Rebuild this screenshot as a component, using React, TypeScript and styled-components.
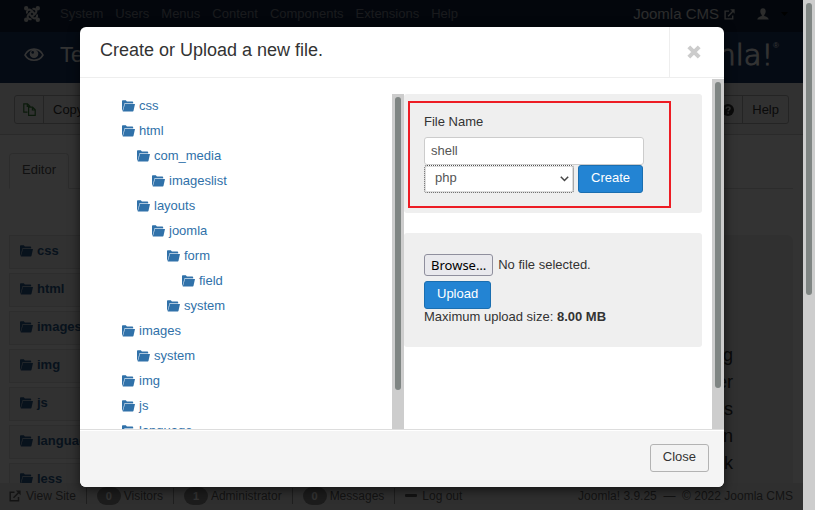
import React from "react";
import styled, { createGlobalStyle } from "styled-components";

const GlobalStyle = createGlobalStyle`
  *, *::before, *::after { box-sizing: border-box; }
  body { margin: 0; font: 13px/18px "Liberation Sans", Arial, sans-serif; color: #333; background: #fff; }
  button, input, select { font: inherit; color: inherit; margin: 0; }
  a { color: inherit; text-decoration: none; }
  h1, h3, p, ul { margin: 0; padding: 0; font-weight: normal; }
  ul { list-style: none; }
`;

const Screen = styled.div`
  display: grid;
  grid-template-columns: minmax(0, 1fr) 12px;
  height: 100vh;
`;

const Page = styled.div`
  position: relative;
  display: flex;
  flex-direction: column;
  overflow: hidden;
`;

const Track = styled.div`
  display: flex;
  justify-content: center;
  padding: 3px 0;
  width: 12px;
  flex: none;
  background: #cdcdcd;
`;

const Thumb = styled.div<{ $size: string }>`
  width: 6px;
  height: ${(p) => p.$size};
  border-radius: 3px;
  background: #7f8583;
`;

const Scrollbar = ({ size }: { size: string }) => (
  <Track aria-hidden="true">
    <Thumb $size={size} />
  </Track>
);

/* ---------- icons ---------- */

const Icon = styled.svg<{ $w?: number; $h?: number }>`
  width: ${(p) => p.$w ?? 13}px;
  height: ${(p) => p.$h ?? 12}px;
  flex: none;
  display: block;
`;

const FolderOpen = () => (
  <Icon viewBox="0 0 13 12" fill="currentColor">
    <path d="M0 1C0 .5.3.2.8.2H3.800L4.900 1.600H10.400c.5 0 .8.300.8.800V3H2.600L.5 10.500 0 10.200Z" />
    <path d="M3 4H13L11.500 10.800c-.1.400-.3.600-.7.600H.8Z" />
    <path d="M2.600 3H11.200V4H3L.8 11.400.3 10.500Z" opacity=".4" />
  </Icon>
);

const External = ({ size = 12 }: { size?: number }) => (
  <Icon $w={size} $h={size} viewBox="0 0 12 12" fill="none" stroke="currentColor" strokeWidth="1.5">
    <path d="M5.500 2.300H1.200V10.800H9.500V7M4.500 7.800 10.200 1.900" />
    <path d="M6.800.4H11.600V5.200Z" fill="currentColor" stroke="none" />
  </Icon>
);

const JoomlaMark = () => (
  <Icon $w={16} $h={16} viewBox="0 0 16 16" fill="none" stroke="currentColor" strokeWidth="2">
    <circle cx="2.200" cy="2.200" r="1.200" fill="currentColor" />
    <circle cx="13.800" cy="2.200" r="1.200" fill="currentColor" />
    <circle cx="2.200" cy="13.800" r="1.200" fill="currentColor" />
    <circle cx="13.800" cy="13.800" r="1.200" fill="currentColor" />
    <path d="M3 7.500C2.300 5 4.500 2.500 7 4.200L11.600 8.800M8.500 3C11 2.300 13.500 4.500 11.800 7L7.200 11.600M13 8.500C13.700 11 11.500 13.500 9 11.800L4.400 7.200M7.500 13C5 13.700 2.500 11.500 4.200 9L8.800 4.400" />
  </Icon>
);

const User = () => (
  <Icon $w={12} $h={12} viewBox="0 0 12 12" fill="currentColor">
    <path d="M6 .3c1.700 0 2.700 1.200 2.700 3 0 1.500-.6 2.900-1.500 3.600v1c2.300.4 4.300 1.500 4.500 3.500H.3c.2-2 2.200-3.100 4.500-3.500v-1c-.9-.7-1.500-2.100-1.500-3.600C3.300 1.500 4.300.3 6 .3Z" />
  </Icon>
);

const Eye = () => (
  <Icon $w={20} $h={14} viewBox="0 0 20 14">
    <path d="M1 7C5-.8 15-.8 19 7 15 14 5 14 1 7Z" fill="none" stroke="currentColor" strokeWidth="1.600" />
    <circle cx="10" cy="5.700" r="4.300" fill="currentColor" />
    <circle cx="8.700" cy="4.400" r="1.300" fill="#1a3867" />
  </Icon>
);

const Copy = () => (
  <Icon $w={13} $h={13} viewBox="0 0 13 13" fill="none" stroke="currentColor" strokeWidth="1.200">
    <path d="M4.500 9.200H.8V.8H4.500L7 3.200V4M4.300.8V3.400H7M5.600 4.200H9.600L12.200 6.800V12.300H5.600ZM9.400 4.200V7H12.200" />
  </Icon>
);

const Question = () => (
  <Icon $w={12} $h={12} viewBox="0 0 12 12">
    <circle cx="6" cy="6" r="6" fill="currentColor" />
    <path d="M4 4.600C4.200 2.300 8 2.400 8 4.500 8 5.900 6.100 5.800 6.100 7.300M6.100 8.300V9.800" fill="none" stroke="#f5f5f5" strokeWidth="1.500" />
  </Icon>
);

const Cross = () => (
  <Icon $w={14} $h={14} viewBox="0 0 14 14" fill="none" stroke="currentColor" strokeWidth="4">
    <path d="M1.800 1.800 12.200 12.200M12.200 1.800 1.800 12.200" />
  </Icon>
);

const Minus = () => (
  <Icon $w={12} $h={12} viewBox="0 0 12 12" fill="currentColor">
    <rect y="4" width="12" height="3" rx="1" />
  </Icon>
);

const Caret = () => (
  <Icon $w={7} $h={4} viewBox="0 0 7 4" fill="#000">
    <path d="M0 0H7L3.500 4Z" />
  </Icon>
);

/* ---------- page behind the dialog ---------- */

const Navbar = styled.nav`
  display: flex;
  align-items: center;
  height: 32px;
  flex: none;
  padding: 0 15px 4px 24px;
  color: #d9d9d9;
  background: #10223e;
`;

const Menu = styled.ul`
  display: flex;
  gap: 12px;
  margin-left: 20px;
  color: #7d8390;
`;

const SiteLink = styled.a`
  display: flex;
  align-items: center;
  gap: 5px;
  margin-left: auto;
  font-size: 15px;
`;

const UserMenu = styled.button`
  display: flex;
  align-items: center;
  gap: 12px;
  margin-left: 22px;
  padding: 0;
  border: 0;
  background: none;
`;

const TitleBar = styled.header`
  display: flex;
  align-items: center;
  height: 51px;
  flex: none;
  padding: 0 24px 6px;
  color: #fff;
  background: #1a3867;
  white-space: nowrap;
`;

const PageTitle = styled.h1`
  margin-left: 16px;
  font-size: 22px;
  line-height: 40px;
`;

const Brand = styled.div`
  display: flex;
  margin-left: auto;
  font: 200 29px/44px "DejaVu Sans", sans-serif;
  -webkit-text-stroke: 1px currentColor;
`;

const Registered = styled.sup`
  font: 8px/26px "Liberation Sans", sans-serif;
  -webkit-text-stroke: 0;
`;

const Toolbar = styled.div`
  display: flex;
  justify-content: space-between;
  flex: none;
  padding: 12px 14px 10px;
  border-bottom: 1px solid #d3d3d3;
  background: #f5f5f5;
`;

const ToolButton = styled.button`
  display: flex;
  align-items: stretch;
  height: 29px;
  padding: 0;
  border: 1px solid #b3b3b3;
  border-radius: 3px;
  background: #f3f3f3;
`;

const ToolIcon = styled.span<{ $color: string }>`
  display: flex;
  align-items: center;
  justify-content: center;
  width: 29px;
  border-right: 1px solid #b3b3b3;
  color: ${(p) => p.$color};
`;

const ToolText = styled.span`
  padding: 0 9px;
  line-height: 28px;
`;

const Content = styled.main`
  flex: 1;
  min-height: 0;
  padding: 18px 10px 0 9px;
  overflow: hidden;
`;

const Tabs = styled.div`
  display: flex;
  border-bottom: 1px solid #ddd;
`;

const Tab = styled.button`
  height: 36px;
  margin-bottom: -1px;
  padding: 0 12px 2px;
  border: 1px solid #ddd;
  border-bottom-color: #fff;
  border-radius: 4px 4px 0 0;
  background: #fff;
  color: #555;
`;

const Columns = styled.div`
  display: grid;
  grid-template-columns: 190px minmax(0, 1fr);
  gap: 20px;
  margin-top: 46px;
`;

const FolderList = styled.ul`
  display: grid;
  align-content: start;
  gap: 4px;
`;

const FolderBox = styled.li`
  border: 1px solid #dedede;
  background: #f5f5f5;
`;

const FolderLink = styled.a<{ $bold?: boolean }>`
  display: flex;
  align-items: center;
  gap: 4px;
  height: ${(p) => (p.$bold ? 32 : 25)}px;
  padding: ${(p) => (p.$bold ? "0 10px 2px" : "0 0 2px")};
  font-weight: ${(p) => (p.$bold ? "bold" : "normal")};
  color: ${(p) => (p.$bold ? "#2a5a8c" : "#3071a9")};
`;

const Hero = styled.section`
  padding: 107px 60px;
  border-radius: 6px;
  background: #eee;
  font-size: 18px;
  line-height: 27px;
  text-align: right;
`;

const StatusBar = styled.footer`
  display: flex;
  align-items: center;
  height: 27px;
  flex: none;
  padding: 0 10px 1px 9px;
  background: #ebebeb;
  color: #626262;
  font-size: 12px;
  white-space: nowrap;
`;

const StatusLink = styled.a`
  display: flex;
  align-items: center;
  gap: 5px;
`;

const Divider = styled.span`
  width: 1px;
  height: 16px;
  margin: 0 10px;
  background: #999;
`;

const Badge = styled.span`
  width: 24px;
  height: 18px;
  margin-right: 3px;
  border-radius: 9px;
  background: #8c8c8c;
  color: #fff;
  font-size: 11px;
  font-weight: bold;
  text-align: center;
`;

const Copyright = styled.p`
  margin-left: auto;
  white-space: pre;
`;

/* ---------- dialog ---------- */

const Backdrop = styled.div`
  position: absolute;
  inset: 0;
  background: rgba(0, 0, 0, 0.8);
`;

const Dialog = styled.section`
  position: absolute;
  inset: 27px 79px 23px 80px;
  display: flex;
  flex-direction: column;
  overflow: hidden;
  border-radius: 6px;
  background: #fff;
  box-shadow: 0 3px 12px rgba(0, 0, 0, 0.6);
`;

const DialogHeader = styled.header`
  display: flex;
  justify-content: space-between;
  height: 51px;
  flex: none;
  border-bottom: 1px solid #eee;
`;

const DialogTitle = styled.h3`
  padding-left: 20px;
  font-size: 18px;
  line-height: 46px;
`;

const CloseIcon = styled.button`
  display: flex;
  align-items: center;
  justify-content: center;
  width: 55px;
  padding: 0 7px 0 0;
  border: 0;
  border-left: 1px solid #eee;
  background: none;
  color: #ccc;
`;

const DialogBody = styled.div`
  display: flex;
  flex: 1;
  min-height: 0;
  margin-top: 1px;
`;

const Panes = styled.div`
  display: grid;
  grid-template-columns: 324px minmax(0, 1fr);
  flex: 1;
  padding: 15px 10px 0 0;
`;

const TreePane = styled.div`
  display: flex;
  justify-content: space-between;
  min-height: 0;
  overflow: hidden;
`;

const Tree = styled.ul`
  padding: 0 0 0 42px;
`;

const TreeItem = styled.li<{ $depth: number }>`
  padding-left: ${(p) => p.$depth * 15}px;
`;

const Forms = styled.div`
  display: flex;
  flex-direction: column;
  gap: 20px;
`;

const Well = styled.form<{ $inset: string }>`
  padding: ${(p) => p.$inset};
  border-radius: 3px;
  background: #efefef;
`;

const Highlight = styled.div`
  width: 263px;
  padding: 10px 14px 13px;
  border: 2px solid #ed1c24;
`;

const FieldLabel = styled.label`
  display: block;
  margin-bottom: 6px;
`;

const TextBox = styled.input`
  display: block;
  width: 220px;
  height: 28px;
  padding: 0 6px 2px;
  border: 1px solid #ccc;
  border-radius: 3px;
  background: #fff;
  color: #555;
`;

const TypeRow = styled.div`
  display: flex;
  gap: 4px;
`;

const SelectWrap = styled.div`
  display: grid;
  align-items: center;
  width: 150px;

  > * { grid-area: 1 / 1; }
  > svg { justify-self: end; margin-right: 5px; pointer-events: none; z-index: 1; }
`;

const Select = styled.select`
  appearance: none;
  width: 100%;
  height: 28px;
  padding: 0 10px 2px;
  border: 1px dotted #555;
  border-radius: 3px;
  background: #fff;
  box-shadow: inset 0 0 0 1px #ddd;
  color: #555;
`;

const Button = styled.button<{ $primary?: boolean }>`
  height: 28px;
  padding: 0 12px 2px;
  border: 1px solid ${(p) => (p.$primary ? "#1a6eb0" : "#b3b3b3")};
  border-radius: 3px;
  background: ${(p) => (p.$primary ? "#2384d3" : "#f3f3f3")};
  color: ${(p) => (p.$primary ? "#fff" : "#333")};
`;

const FileRow = styled.label`
  display: flex;
  align-items: center;
  gap: 5px;
  margin-bottom: 5px;
`;

const HiddenFile = styled.input`
  position: absolute;
  width: 1px;
  height: 1px;
  opacity: 0;
`;

const Browse = styled.span`
  padding: 0 6px;
  border: 1px solid #8f8f9d;
  border-radius: 3px;
  background: #e9e9ed;
  color: #000;
  font: 13px/20px "Noto Sans", sans-serif;
`;

const SizeNote = styled.p`
  line-height: 16px;
`;

const DialogFooter = styled.footer`
  display: flex;
  justify-content: flex-end;
  height: 58px;
  flex: none;
  padding: 14px 15px;
  border-top: 1px solid #ddd;
  background: #f4f4f4;
  box-shadow: inset 0 1px 0 #fff;
`;

const menus = ["System", "Users", "Menus", "Content", "Components", "Extensions", "Help"];
const folders = ["css", "html", "images", "img", "js", "language", "less"];
const heroLines = ["g", "er", "s", "n", "k"];
const status: [string, string][] = [["0", "Visitors"], ["1", "Administrator"], ["0", "Messages"]];
const tree: [string, number][] = [
  ["css", 0], ["html", 0], ["com_media", 1], ["imageslist", 2], ["layouts", 1], ["joomla", 2],
  ["form", 3], ["field", 4], ["system", 3], ["images", 0], ["system", 1], ["img", 0], ["js", 0], ["language", 0],
];

export default function App() {
  return (
    <>
      <GlobalStyle />
      <Screen>
        <Page>
          <Navbar>
            <JoomlaMark />
            <Menu>{menus.map((m) => <li key={m}>{m}</li>)}</Menu>
            <SiteLink href="#site">Joomla CMS <External size={11} /></SiteLink>
            <UserMenu aria-label="User menu"><User /><Caret /></UserMenu>
          </Navbar>
          <TitleBar>
            <Eye />
            <PageTitle>Templates</PageTitle>
            <Brand>Joomla!<Registered>®</Registered></Brand>
          </TitleBar>
          <Toolbar>
            <ToolButton><ToolIcon $color="#378137"><Copy /></ToolIcon><ToolText>Copy Template</ToolText></ToolButton>
            <ToolButton><ToolIcon $color="#333"><Question /></ToolIcon><ToolText>Help</ToolText></ToolButton>
          </Toolbar>
          <Content>
            <Tabs><Tab>Editor</Tab></Tabs>
            <Columns>
              <FolderList>
                {folders.map((f) => (
                  <FolderBox key={f}><FolderLink href="#folder" $bold><FolderOpen />{f}</FolderLink></FolderBox>
                ))}
              </FolderList>
              <Hero>{heroLines.map((l) => <p key={l}>{l}</p>)}</Hero>
            </Columns>
          </Content>
          <StatusBar>
            <StatusLink href="#view"><External />View Site</StatusLink>
            {status.map(([n, label]) => (
              <React.Fragment key={label}><Divider /><Badge>{n}</Badge>{label}</React.Fragment>
            ))}
            <Divider />
            <StatusLink href="#logout"><Minus />Log out</StatusLink>
            <Copyright>{"Joomla! 3.9.25  —  © 2022 Joomla CMS"}</Copyright>
          </StatusBar>

          <Backdrop />
          <Dialog role="dialog" aria-labelledby="dialog-title">
            <DialogHeader>
              <DialogTitle id="dialog-title">Create or Upload a new file.</DialogTitle>
              <CloseIcon aria-label="Close dialog"><Cross /></CloseIcon>
            </DialogHeader>
            <DialogBody>
              <Panes>
                <TreePane>
                  <Tree>
                    {tree.map(([name, depth], i) => (
                      <TreeItem key={i} $depth={depth}>
                        <FolderLink href="#folder"><FolderOpen />{name}</FolderLink>
                      </TreeItem>
                    ))}
                  </Tree>
                  <Scrollbar size="89%" />
                </TreePane>
                <Forms>
                  <Well $inset="7px 4px 5px" onSubmit={(e) => e.preventDefault()}>
                    <Highlight>
                      <FieldLabel htmlFor="file-name">File Name</FieldLabel>
                      <TextBox id="file-name" defaultValue="shell" />
                      <TypeRow>
                        <SelectWrap>
                          <Select aria-label="File type" defaultValue="php">
                            <option value="php">php</option>
                          </Select>
                          <Icon $w={9} $h={6} viewBox="0 0 9 6" fill="none" stroke="#444" strokeWidth="1.500">
                            <path d="M.8.8 4.500 4.500 8.200.8" />
                          </Icon>
                        </SelectWrap>
                        <Button $primary type="submit">Create</Button>
                      </TypeRow>
                    </Highlight>
                  </Well>
                  <Well $inset="21px 20px 22px" onSubmit={(e) => e.preventDefault()}>
                    <FileRow>
                      <HiddenFile type="file" />
                      <Browse>Browse…</Browse>
                      No file selected.
                    </FileRow>
                    <Button $primary type="submit">Upload</Button>
                    <SizeNote>Maximum upload size: <strong>8.00 MB</strong></SizeNote>
                  </Well>
                </Forms>
              </Panes>
              <Scrollbar size="89%" />
            </DialogBody>
            <DialogFooter><Button type="button">Close</Button></DialogFooter>
          </Dialog>
        </Page>
        <Scrollbar size="58%" />
      </Screen>
    </>
  );
}
